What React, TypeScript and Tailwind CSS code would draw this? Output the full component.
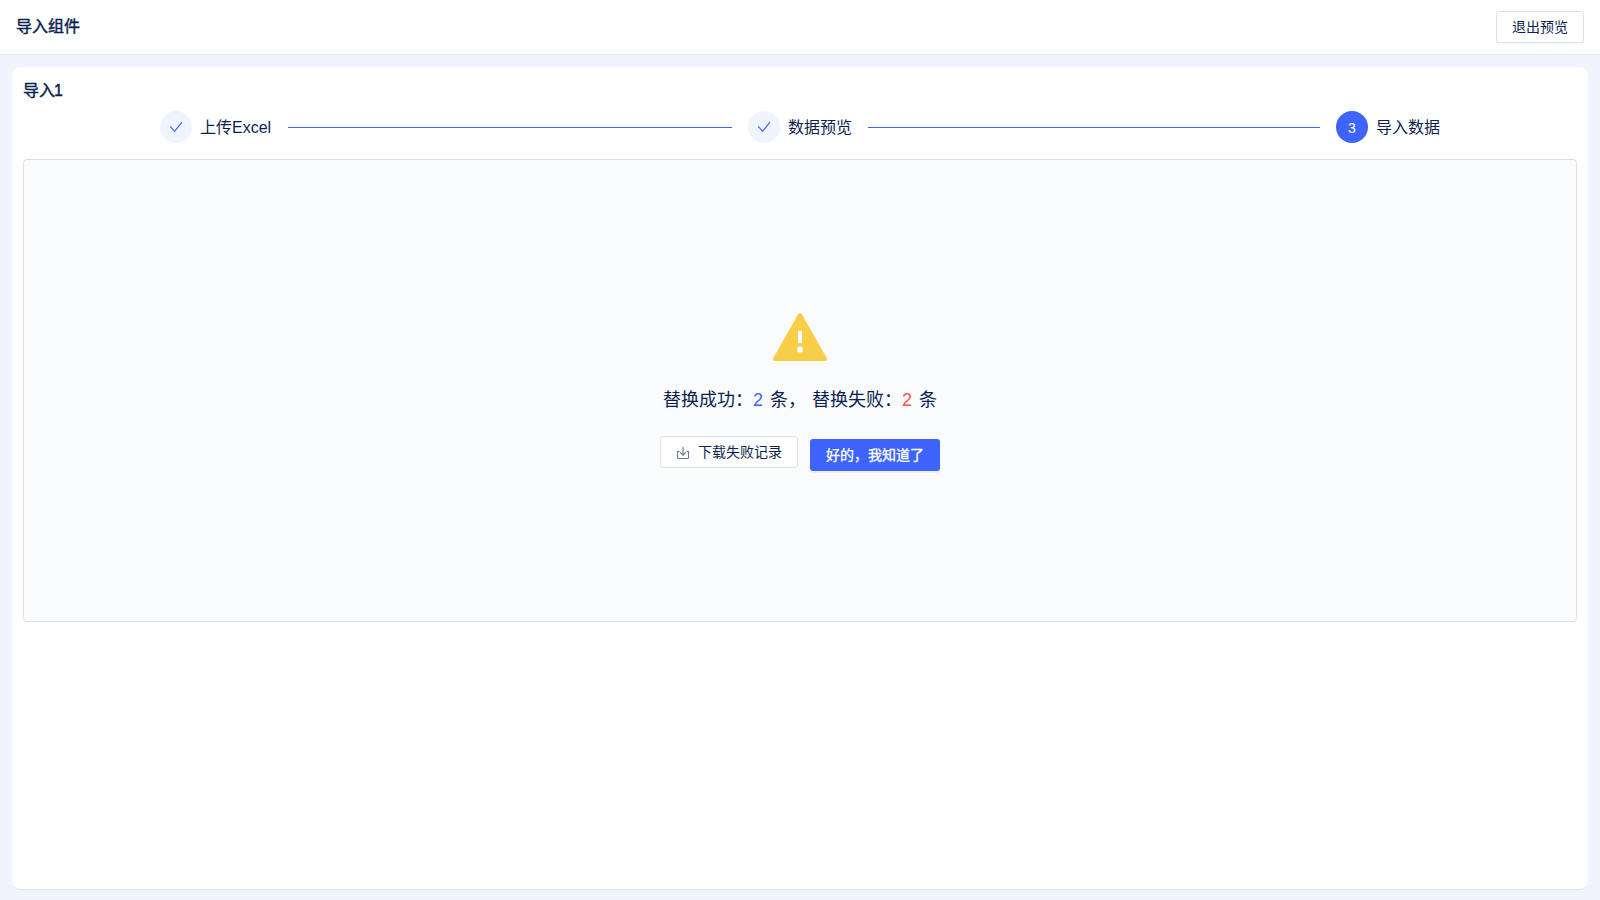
import type { ReactNode } from "react";

function CheckIcon() {
  return (
    <svg width="16" height="16" viewBox="0 0 16 16" fill="none" stroke="#3d64ff" strokeWidth="1.15">
      <path d="M2.2 7.4 L6.6 12.4 L14 3.2" />
    </svg>
  );
}

function DownloadIcon() {
  return (
    <svg className="mt-0.5" width="14" height="14" viewBox="0 0 14 14" fill="none" stroke="#6b7797" strokeWidth="1.1">
      <path d="M3.4 5.5 H1.5 V11.9 Q1.5 12.5 2.1 12.5 H11.9 Q12.5 12.5 12.5 11.9 V5.5 H10.6" />
      <path d="M7 1 V9 M4.2 6.4 L7 9.2 L9.8 6.4" />
    </svg>
  );
}

function WarningIcon() {
  return (
    <svg width="54" height="48" viewBox="0 0 54 48">
      <path
        d="M25.3 1.1 Q27 -0.9 28.7 1.1 L53.6 44.8 Q54.6 47.6 52 48 H2 Q-0.6 47.6 0.4 44.8 Z"
        fill="#f8cd48"
      />
      <rect x="25" y="17.7" width="4" height="12.3" fill="#fff" />
      <circle cx="27" cy="36.5" r="3" fill="#fff" />
    </svg>
  );
}

function Step({ label, done, index }: { label: string; done?: boolean; index: number }) {
  return (
    <div className="flex items-center gap-2">
      <span
        className={
          done
            ? "flex size-8 items-center justify-center rounded-full bg-[#f0f4ff]"
            : "flex size-8 items-center justify-center rounded-full bg-[#3d64ff] pt-px text-sm text-white"
        }
      >
        {done ? <CheckIcon /> : index}
      </span>
      <span className="pt-0.5 text-base leading-[30px] whitespace-nowrap">{label}</span>
    </div>
  );
}

function Connector({ className = "" }: { className?: string }) {
  return <div className={`mr-4 mt-px h-px flex-1 bg-[#3d64ff] ${className}`} />;
}

function OutlineButton({ children, className = "" }: { children: ReactNode; className?: string }) {
  return (
    <button
      className={`flex h-8 items-center justify-center rounded-[3px] border border-[#dcdfec] bg-white text-sm ${className}`}
    >
      {children}
    </button>
  );
}

export default function App() {
  return (
    <div className="flex h-screen flex-col bg-[#f1f4fd] font-['Liberation_Sans','Noto_Sans_CJK_SC',sans-serif] text-[#0c1f50]">
      <header className="flex h-[55px] items-center justify-between border-b border-[#e4e8f2] bg-white px-4">
        <h1 className="text-base font-normal [-webkit-text-stroke:0.45px_#0c1f50]">导入组件</h1>
        <OutlineButton className="w-[88px] shadow-[0_2px_0_#f8f9fd]">退出预览</OutlineButton>
      </header>
      <main className="mx-3 mt-3 mb-[11px] flex-1 rounded-lg bg-white px-[11px] pt-[13px] shadow-[0_1px_1px_#dfe4f0]">
        <h2 className="text-base leading-[22px] font-normal [-webkit-text-stroke:0.45px_#0c1f50]">
          导入<span className="-ml-px">1</span>
        </h2>
        <div className="mt-[9px] mr-[137px] ml-[137px] flex items-center">
          <div className="flex w-[588px] items-center">
            <Step label="上传Excel" done index={1} />
            <Connector className="ml-[17px]" />
          </div>
          <div className="flex w-[588px] items-center">
            <Step label="数据预览" done index={2} />
            <Connector className="ml-4" />
          </div>
          <Step label="导入数据" index={3} />
        </div>
        <section className="mt-4 flex h-[463px] flex-col items-center rounded-[4px] border border-[#dcdfec] bg-[#fafbfd] pt-[153px]">
          <WarningIcon />
          <p className="mt-[25px] flex h-7 text-lg leading-7 whitespace-pre [word-spacing:1px]">
            <span>替换成功：</span>
            <span className="w-[11px] text-[#3d64ff]">2</span>
            <span> 条， 替换失败：</span>
            <span className="w-[11px] text-[#f0524f]">2</span>
            <span> 条</span>
          </p>
          <div className="mt-[22px] flex gap-3">
            <OutlineButton className="w-[138px] gap-2">
              <DownloadIcon />
              下载失败记录
            </OutlineButton>
            <button className="mt-[3px] h-8 w-[130px] rounded-[3px] bg-[#3d64ff] pb-px text-sm text-white shadow-[0_2px_0_#eff2fc] [-webkit-text-stroke:0.3px_#fff]">
              好的，我知道了
            </button>
          </div>
        </section>
      </main>
    </div>
  );
}
